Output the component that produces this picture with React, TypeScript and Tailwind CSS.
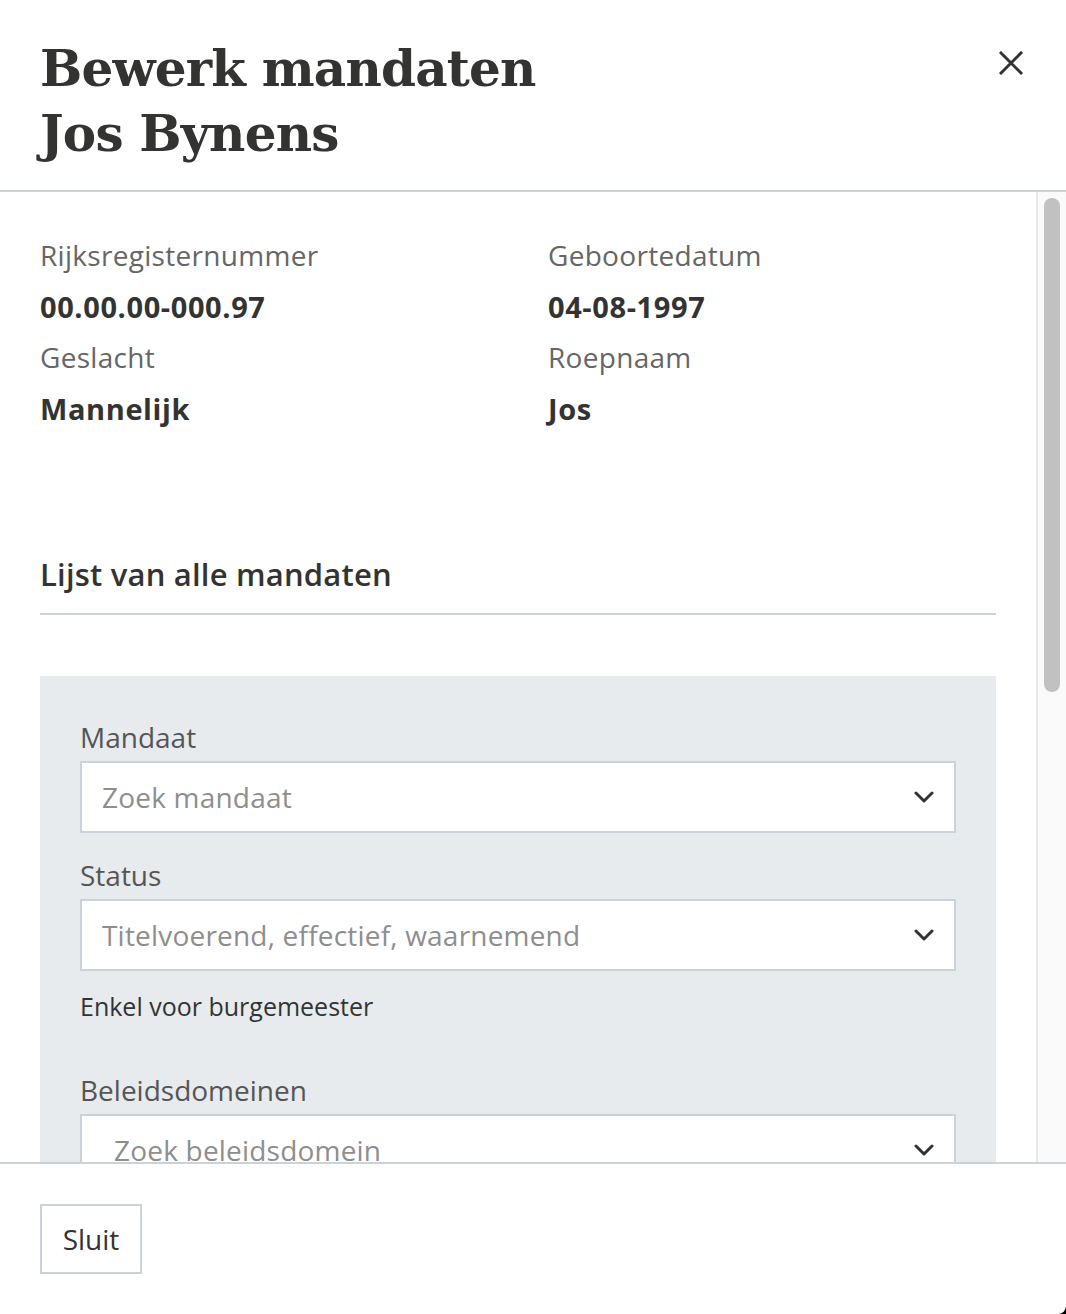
import React from 'react';

const sans = "font-['Open_Sans',_'Liberation_Sans',_sans-serif]";

const Chevron = () => (
  <svg width="20" height="14" viewBox="0 0 20 14" fill="none" className="shrink-0">
    <polyline points="2,3 10,11 18,3" stroke="#333332" strokeWidth="3" strokeLinecap="round" strokeLinejoin="round" />
  </svg>
);

interface SelectProps {
  label: string;
  placeholder: string;
  indent?: boolean;
}

const SelectField: React.FC<SelectProps> = ({ label, placeholder, indent }) => (
  <div className="flex flex-col">
    <label className="text-[28px] leading-[40px] text-[#555]">{label}</label>
    <div className="mt-1 h-[72px] bg-white border-2 border-[#cbd2da] flex items-center justify-between pr-5 shrink-0">
      <span className={`${indent ? 'pl-[32px]' : 'pl-5'} text-[28px] text-[#8e8e8e] tracking-[0.2px]`}>{placeholder}</span>
      <Chevron />
    </div>
  </div>
);

const details = [
  { label: 'Rijksregisternummer', value: '00.00.00-000.97' },
  { label: 'Geboortedatum', value: '04-08-1997' },
  { label: 'Geslacht', value: 'Mannelijk' },
  { label: 'Roepnaam', value: 'Jos' },
];

export default function App() {
  return (
    <div className={`w-[1066px] h-[1314px] bg-black ${sans}`}>
      <div className="w-full h-full bg-white rounded-br-[8px] flex flex-col overflow-hidden">
        {/* Header */}
        <div className="h-[192px] shrink-0 border-b-2 border-[#cbd2da] flex justify-between pl-10 pr-10 pt-[36px]">
          <h1 className="font-['DejaVu_Serif',_serif] font-bold text-[50px] leading-[65px] text-[#333332] tracking-[-0.8px]">
            Bewerk mandaten
            <br />
            Jos Bynens
          </h1>
          <button className="mt-[14px] mr-[2px] h-[26px] w-[26px] flex items-center justify-center">
            <svg width="24" height="24" viewBox="0 0 24 24">
              <path d="M2 2 L22 22 M22 2 L2 22" stroke="#333332" strokeWidth="3" strokeLinecap="square" />
            </svg>
          </button>
        </div>

        {/* Body */}
        <div className="flex-1 flex min-h-0">
          <div className="flex-1 overflow-hidden pl-10 pr-10 pt-[38px]">
            <div className="grid grid-cols-[508px_1fr] leading-[51px]">
              {details.map(d => (
                <div key={d.label} className="flex flex-col">
                  <span className="text-[28px] text-[#666] tracking-[0.3px]">{d.label}</span>
                  <span className="text-[29px] font-bold text-[#333332] tracking-[0.6px]">{d.value}</span>
                </div>
              ))}
            </div>

            <div className="mt-[120px] border-b-2 border-[#cbd2da] pb-[19px]">
              <h2 className="text-[31px] leading-[40px] font-semibold text-[#333332] tracking-[0.2px]">Lijst van alle mandaten</h2>
            </div>

            <div className="mt-[61px] bg-[#e8ebee] px-10 pt-[41px] pb-10 flex flex-col">
              <SelectField label="Mandaat" placeholder="Zoek mandaat" />
              <div className="mt-[22px]">
                <SelectField label="Status" placeholder="Titelvoerend, effectief, waarnemend" />
              </div>
              <p className="mt-[17px] text-[25px] leading-[36px] text-[#333332]">Enkel voor burgemeester</p>
              <div className="mt-[46px]">
                <SelectField label="Beleidsdomeinen" placeholder="Zoek beleidsdomein" indent />
              </div>
            </div>
          </div>

          {/* scrollbar */}
          <div className="w-[30px] shrink-0 bg-[#fafafa] border-l-2 border-[#e8e8e8] pt-[6px] pl-[6px] pr-[4px]">
            <div className="h-[494px] w-[16px] rounded-full bg-[#c1c1c1]" />
          </div>
        </div>

        {/* Footer */}
        <div className="h-[152px] shrink-0 border-t-2 border-[#cbd2da] pl-10 pt-10">
          <button className="h-[70px] w-[102px] border-2 border-[#cbd2da] bg-white text-[28px] text-[#333332]">
            Sluit
          </button>
        </div>
      </div>
    </div>
  );
}
